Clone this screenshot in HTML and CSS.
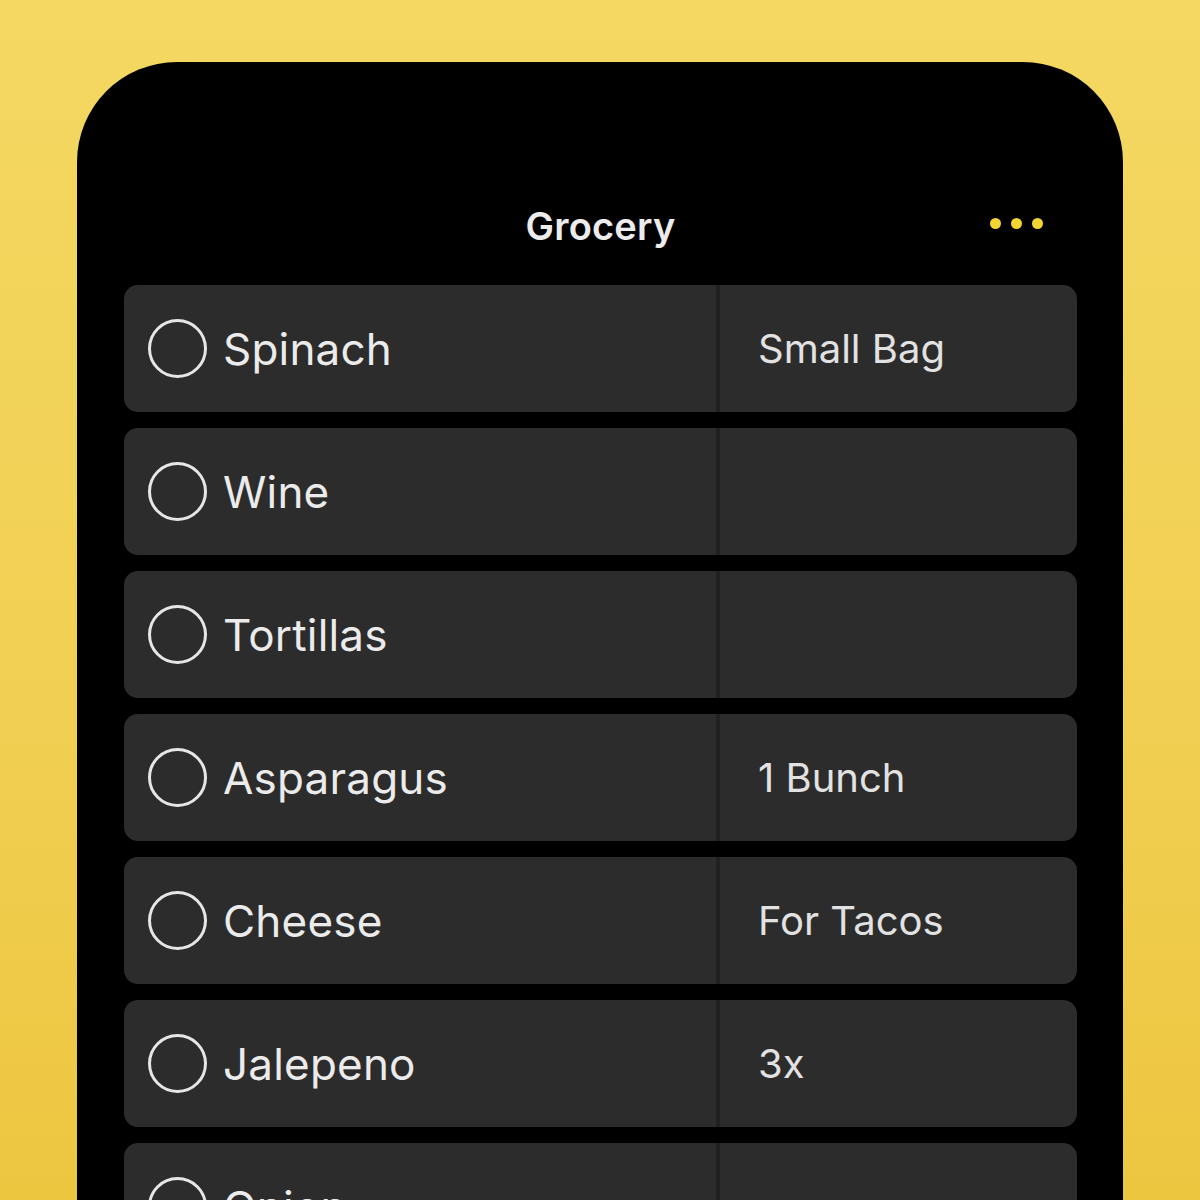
FILE: index.html
```html
<!DOCTYPE html>
<html>
<head>
<meta charset="utf-8">
<link rel="stylesheet" href="styles.css">
</head>
<body>
<div class="phone">
  <header class="nav">
    <div class="title">Grocery</div>
    <div class="more"><span></span><span></span><span></span></div>
  </header>
  <div class="list">
    <div class="row"><div class="item"><span class="check"></span><span class="name">Spinach</span></div><div class="note">Small Bag</div></div>
    <div class="row"><div class="item"><span class="check"></span><span class="name">Wine</span></div><div class="note"></div></div>
    <div class="row"><div class="item"><span class="check"></span><span class="name">Tortillas</span></div><div class="note"></div></div>
    <div class="row"><div class="item"><span class="check"></span><span class="name">Asparagus</span></div><div class="note">1 Bunch</div></div>
    <div class="row"><div class="item"><span class="check"></span><span class="name">Cheese</span></div><div class="note">For Tacos</div></div>
    <div class="row"><div class="item"><span class="check"></span><span class="name">Jalepeno</span></div><div class="note">3x</div></div>
    <div class="row"><div class="item"><span class="check"></span><span class="name">Onion</span></div><div class="note"></div></div>
  </div>
</div>
</body>
</html>
```
FILE: styles.css
```css
html, body {
  margin: 0;
  height: 1200px;
  overflow: hidden;
}
body {
  background: linear-gradient(180deg, #f4d862 0%, #f1cf52 60%, #edc640 100%);
  padding-top: 62px;
  box-sizing: border-box;
  font-family: Inter, "Liberation Sans", sans-serif;
}
.phone {
  margin: 0 77px;
  height: 1300px;
  background: #000;
  border-radius: 100px 100px 0 0;
  padding: 0 46px 0 47px;
}
.nav {
  position: relative;
  height: 223px;
  display: flex;
  align-items: flex-end;
  justify-content: center;
}
.title {
  color: #ececec;
  font-size: 38px;
  font-weight: 600;
  line-height: 50px;
  margin-bottom: 34px;
  letter-spacing: 0.2px;
}
.more {
  position: absolute;
  right: 34px;
  top: 156px;
  display: flex;
  gap: 10px;
}
.more span {
  width: 11px;
  height: 11px;
  border-radius: 50%;
  background: #f4d430;
}
.list {
  display: flex;
  flex-direction: column;
  gap: 16px;
}
.row {
  height: 127px;
  display: grid;
  grid-template-columns: 592px 4px 1fr;
  background: #2c2c2c;
  border-radius: 14px;
  overflow: hidden;
}
.row::before {
  content: "";
  grid-column: 2;
  grid-row: 1;
  background: #212121;
}
.item {
  grid-column: 1;
  grid-row: 1;
  display: flex;
  align-items: center;
  padding-left: 24px;
  gap: 16px;
}
.check {
  width: 53px;
  height: 53px;
  border: 3.5px solid #e6e6e6;
  border-radius: 50%;
  flex: none;
}
.name {
  color: #ebebeb;
  font-size: 44px;
  letter-spacing: 0.2px;
}
.note {
  grid-column: 3;
  grid-row: 1;
  display: flex;
  align-items: center;
  padding-left: 38px;
  color: #e2e2e2;
  font-size: 40px;
}
```
